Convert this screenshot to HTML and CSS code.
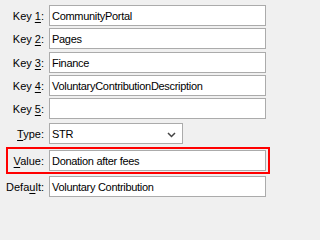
FILE: index.html
```html
<!DOCTYPE html>
<html>
<head>
<meta charset="utf-8">
<link rel="stylesheet" href="styles.css">
</head>
<body>
<div class="form">
  <div class="row r1"><label class="lbl">Key <u>1</u>:</label><div class="box">CommunityPortal</div></div>
  <div class="row r2"><label class="lbl">Key <u>2</u>:</label><div class="box">Pages</div></div>
  <div class="row r3"><label class="lbl">Key <u>3</u>:</label><div class="box">Finance</div></div>
  <div class="row r4"><label class="lbl">Key <u>4</u>:</label><div class="box">VoluntaryContributionDescription</div></div>
  <div class="row r5"><label class="lbl">Key <u>5</u>:</label><div class="box"></div></div>
  <div class="row r6"><label class="lbl"><u>T</u>ype:</label><div class="box select">STR<svg class="chev" width="9" height="6" viewBox="0 0 9 6"><path d="M1 1 L4.5 4.5 L8 1" fill="none" stroke="#444" stroke-width="1.5"/></svg></div></div>
  <div class="hl">
    <div class="row hrow"><label class="lbl hlbl"><u>V</u>alue:</label><div class="box">Donation after fees</div></div>
  </div>
  <div class="row r8"><label class="lbl">Defa<u>u</u>lt:</label><div class="box">Voluntary Contribution</div></div>
</div>
</body>
</html>
```
FILE: styles.css
```css
html, body {
  margin: 0;
  padding: 0;
  background: #f0f0f0;
}
body {
  width: 271px;
  height: 202px;
  overflow: hidden;
  font-family: "Liberation Sans", Arial, sans-serif;
  font-size: 11px;
  color: #000;
}
.form {
  display: flex;
  flex-direction: column;
  padding-top: 5px;
}
.row {
  display: flex;
  align-items: center;
  height: 21px;
}
.r2 { margin-top: 2px; }
.r3 { margin-top: 3px; }
.r4 { margin-top: 2px; }
.r5 { margin-top: 2px; }
.r6 { margin-top: 4px; }
.r8 { margin-top: 2px; }
.lbl {
  width: 49px;
  padding-right: 5px;
  box-sizing: border-box;
  text-align: right;
  white-space: nowrap;
}
.lbl u {
  text-decoration-thickness: 1px;
  text-underline-offset: 2px;
}
.box {
  width: 217px;
  height: 21px;
  box-sizing: border-box;
  border: 1px solid #ababab;
  background: #fff;
  padding-left: 2px;
  display: flex;
  align-items: center;
  letter-spacing: -0.3px;
  white-space: nowrap;
  overflow: hidden;
}
.select {
  width: 134px;
  position: relative;
}
.chev {
  position: absolute;
  right: 6px;
  top: 8px;
}
.hl {
  margin-top: 3px;
  margin-left: 6px;
  width: 264px;
  height: 27px;
  box-sizing: border-box;
  border: 2px solid #f00;
  padding-top: 1px;
}
.hlbl {
  width: 41px;
}
```
